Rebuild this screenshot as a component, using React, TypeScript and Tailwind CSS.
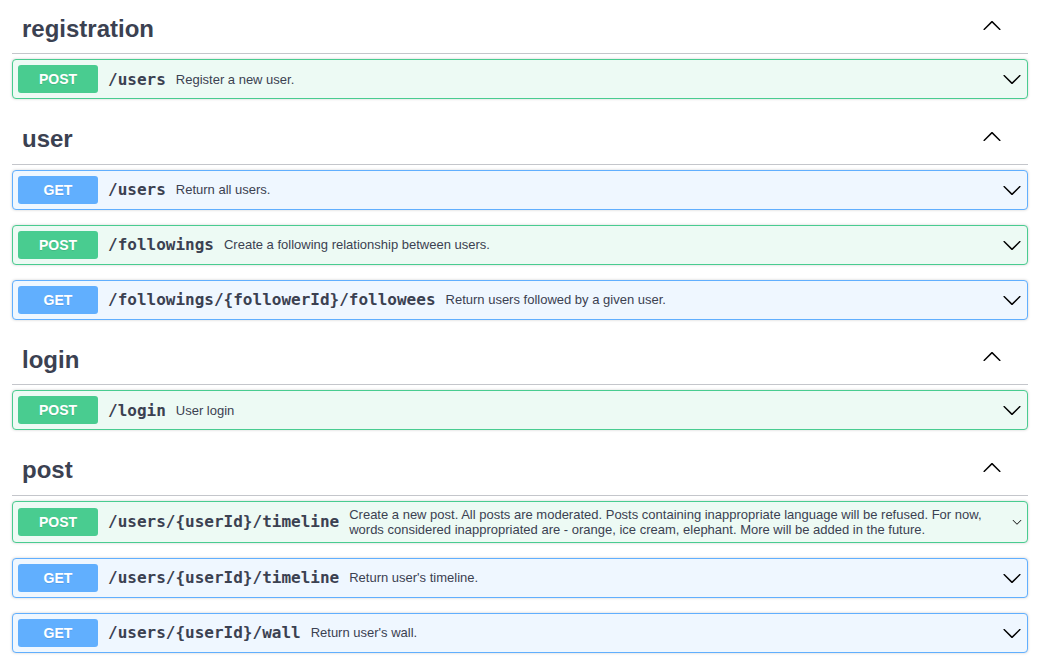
import React from "react"

type Method = "GET" | "POST"

type Op = {
  method: Method
  path: string
  summary: string
  squeeze?: boolean
}

type Tag = {
  name: string
  ops: Op[]
}

const TAGS: Tag[] = [
  {
    name: "registration",
    ops: [{ method: "POST", path: "/users", summary: "Register a new user." }],
  },
  {
    name: "user",
    ops: [
      { method: "GET", path: "/users", summary: "Return all users." },
      { method: "POST", path: "/followings", summary: "Create a following relationship between users." },
      { method: "GET", path: "/followings/{followerId}/followees", summary: "Return users followed by a given user." },
    ],
  },
  {
    name: "login",
    ops: [{ method: "POST", path: "/login", summary: "User login" }],
  },
  {
    name: "post",
    ops: [
      {
        method: "POST",
        path: "/users/{userId}/timeline",
        summary:
          "Create a new post. All posts are moderated. Posts containing inappropriate language will be refused. For now, words considered inappropriated are - orange, ice cream, elephant. More will be added in the future.",
        squeeze: true,
      },
      { method: "GET", path: "/users/{userId}/timeline", summary: "Return user's timeline." },
      { method: "GET", path: "/users/{userId}/wall", summary: "Return user's wall." },
    ],
  },
]

const ARROW =
  "M17.418 6.109c.272-.268.709-.268.979 0s.271.701 0 .969l-7.908 7.83c-.27.268-.707.268-.979 0l-7.908-7.83c-.27-.268-.27-.701 0-.969.271-.268.709-.268.979 0L10 13.25l7.418-7.141z"

function Arrow({ up, small }: { up?: boolean; small?: boolean }) {
  return (
    <svg
      width={small ? 10 : 20}
      height="20"
      viewBox="0 0 20 20"
      className={small ? "w-[10px] h-[20px] shrink-0" : "w-[20px] h-[20px] shrink-0"}
    >
      <path d={ARROW} fill="#000" transform={up ? "rotate(180 10 10)" : undefined} />
    </svg>
  )
}

function Operation({ op }: { op: Op }) {
  const isGet = op.method === "GET"
  return (
    <div
      className={`mb-[15px] rounded-[4px] border shadow-[0_0_3px_rgba(0,0,0,0.19)] ${
        isGet ? "border-[#61affe] bg-[#eff7ff]" : "border-[#49cc90] bg-[#edfaf4]"
      }`}
    >
      <div className="flex items-center p-[5px]">
        <span
          className={`w-[80px] shrink-0 rounded-[3px] py-[6px] text-center text-[14px] font-bold leading-[16px] text-white [text-shadow:0_1px_0_rgba(0,0,0,0.1)] ${
            isGet ? "bg-[#61affe]" : "bg-[#49cc90]"
          }`}
        >
          {op.method}
        </span>
        <span className="shrink-0 px-[10px] pt-[1px] font-['DejaVu_Sans_Mono',monospace] text-[16px] font-semibold text-[#3b4151]">
          {op.path}
        </span>
        <div className="min-w-0 flex-1 text-[13px] leading-[15px] text-[#3b4151]">{op.summary}</div>
        <Arrow small={op.squeeze} />
      </div>
    </div>
  )
}

export default function App() {
  return (
    <div className="min-h-screen bg-white pl-[12px] pr-[14px] pt-[3.5px] font-['Liberation_Sans',Arial,sans-serif]">
      {TAGS.map((tag) => (
        <div key={tag.name}>
          <h3 className="mb-[5px] flex items-center border-b border-[#c4c6cb] py-[10px] pl-[10px] pr-[20px] text-[24px] font-bold leading-[29.5px] text-[#3b4151]">
            <span className="flex-1">{tag.name}</span>
            <span className="mr-[6px] -mt-[4px] flex">
              <Arrow up />
            </span>
          </h3>
          {tag.ops.map((op) => (
            <Operation key={op.method + op.path} op={op} />
          ))}
        </div>
      ))}
    </div>
  )
}
